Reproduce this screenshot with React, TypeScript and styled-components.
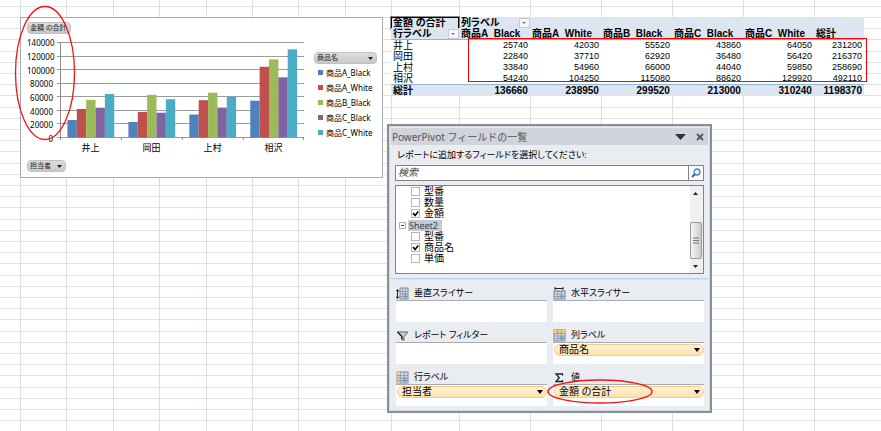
import React from "react";
import styled, { createGlobalStyle } from "styled-components";

const latin = `"Noto Sans", "Noto Sans CJK JP", sans-serif`;
const gothic = `"Liberation Sans", "Noto Sans CJK JP", sans-serif`;

const Global = createGlobalStyle`
  * { box-sizing: border-box; }
  body { margin: 0; background: #fff; font-family: ${gothic}; font-feature-settings: "palt"; color: #000; }
  button, input { font: inherit; font-feature-settings: inherit; color: inherit; margin: 0; padding: 0; }
`;

/* ---------- worksheet ---------- */

const Sheet = styled.main`
  position: relative;
  min-height: 100vh;
  overflow: hidden;
  display: flex;
  align-items: flex-start;
  gap: 4px;
  padding: 17px 17px 17px 20px;
`;

const GridLayer = styled.div`
  position: absolute;
  inset: 0;
`;

const Rules = styled.div`
  position: absolute;
  inset: 0;
`;

const RowRule = styled.div<{ $h: number }>`
  height: ${(p) => p.$h}px;
  border-bottom: 1px solid #e0e2e2;
`;

const ColumnRules = styled(Rules)`
  display: grid;
  grid-template-columns: 21px repeat(8, 1fr) 68px repeat(5, 71px) 50px 16px;
`;

const ColumnRule = styled.div`
  border-right: 1px solid #dbdede;
  &:last-child { border-right: 0; }
`;

const rowHeights = Array.from({ length: 120 }, (_, i) => (i === 0 ? 7 : i % 5 === 4 ? 12 : 11));

/* ---------- chart ---------- */

const ChartFrame = styled.section`
  position: relative;
  flex: 1 1 0;
  min-width: 300px;
  background: #fff;
  border: 1px solid #a9abac;
  padding: 4px 5px 5px 6px;
  display: flex;
  flex-direction: column;
  align-items: stretch;
  font-family: ${latin};
  font-size: 8px;
  line-height: 12px;
`;

const FieldButton = styled.button<{ $wide?: boolean }>`
  display: flex;
  align-items: center;
  justify-content: space-between;
  gap: 6px;
  align-self: ${(p) => (p.$wide ? "stretch" : "flex-start")};
  height: 12px;
  padding: 0 3px 0 2px;
  border: 1px solid #bfc1c3;
  border-radius: 4px;
  background: linear-gradient(#dcdddf, #c6c8ca);
  font-size: 7px;
  line-height: 10px;
  color: #222;
  white-space: nowrap;
`;

const ChartBody = styled.div`
  display: flex;
  height: 126px;
`;

const Axis = styled.div`
  width: 26px;
  padding-top: 3px;
  display: flex;
  flex-direction: column;
  text-align: right;
`;

const AxisLabel = styled.span`
  flex: 0 0 auto;
  height: 12px;
  margin-bottom: 2px;
  &:nth-child(3n) { margin-bottom: 1px; }
`;

const PlotColumn = styled.div`
  flex: 1;
  padding-top: 8px;
  padding-left: 4px;
`;

const Plot = styled.svg`
  display: block;
  width: 100%;
  height: 99px;
`;

const Categories = styled.div`
  display: grid;
  grid-template-columns: repeat(4, 1fr);
  padding-left: 3px;
  margin-top: 1px;
  text-align: center;
  font-size: 9px;
`;

const Legend = styled.div`
  width: 63px;
  margin: 18px 0 0 10px;
  display: flex;
  flex-direction: column;
  gap: 2px;
`;

const LegendItem = styled.div`
  display: flex;
  align-items: center;
  gap: 3px;
  padding-left: 4px;
  height: 13px;
  white-space: nowrap;
  font-feature-settings: normal;
`;

const Swatch = styled.i<{ $c: string }>`
  width: 5px;
  height: 5px;
  background: ${(p) => p.$c};
`;

const Series = [
  { name: "商品A_Black", color: "#4f81bd", values: [25740, 22840, 33840, 54240] },
  { name: "商品A_White", color: "#c0504d", values: [42030, 37710, 54960, 104250] },
  { name: "商品B_Black", color: "#9bbb59", values: [55520, 62920, 66000, 115080] },
  { name: "商品C_Black", color: "#8064a2", values: [43860, 36480, 44040, 88620] },
  { name: "商品C_White", color: "#4bacc6", values: [64050, 56420, 59850, 129920] },
];
const people = ["井上", "岡田", "上村", "相沢"];
const ticks = [140000, 120000, 100000, 80000, 60000, 40000, 20000, 0];

const Arrow = ({ w = 5, h = 3, up = false, color = "#222" }: { w?: number; h?: number; up?: boolean; color?: string }) => (
  <svg width={w} height={h} viewBox="0 0 10 6" preserveAspectRatio="none" aria-hidden="true">
    <path d={up ? "M0 6h10L5 0z" : "M0 0h10L5 6z"} fill={color} />
  </svg>
);

function Chart() {
  return (
    <ChartFrame aria-label="金額の合計">
      <FieldButton>金額 の合計</FieldButton>
      <ChartBody>
        <Axis>
          {ticks.map((t) => (
            <AxisLabel key={t}>{t}</AxisLabel>
          ))}
        </Axis>
        <PlotColumn>
          <Plot viewBox="0 0 248 99" preserveAspectRatio="none" aria-hidden="true">
            {ticks.map((t, i) => (
              <rect key={t} x="0" y={Math.round(i * 13.57)} width="248" height="1" fill="#9b9b9b" />
            ))}
            <rect x="3" y="0" width="1" height="98" fill="#8a8a8a" />
            {[0, 1, 2, 3, 4].map((i) => (
              <rect key={i} x={Math.min(3 + i * 61.2, 247)} y="95" width="1" height="3" fill="#8a8a8a" />
            ))}
            {people.map((_, g) =>
              Series.map((s, i) => {
                const h = (s.values[g] / 140000) * 95;
                return <rect key={s.name + g} x={3.5 + g * 61.2 + 7 + i * 9.4} y={95.5 - h} width="9.4" height={h} fill={s.color} />;
              })
            )}
          </Plot>
          <Categories>
            {people.map((p) => (
              <span key={p}>{p}</span>
            ))}
          </Categories>
        </PlotColumn>
        <Legend>
          <FieldButton $wide>
            商品名 <Arrow />
          </FieldButton>
          {Series.map((s) => (
            <LegendItem key={s.name}>
              <Swatch $c={s.color} />
              {s.name}
            </LegendItem>
          ))}
        </Legend>
      </ChartBody>
      <FieldButton>
        担当者 <Arrow />
      </FieldButton>
    </ChartFrame>
  );
}

/* ---------- pivot table ---------- */

const RightSide = styled.div`
  position: relative;
  flex: 0 0 auto;
`;

const TableWrap = styled.div`
  position: relative;
  margin-left: 4px;
`;

const Table = styled.table`
  border-collapse: collapse;
  table-layout: fixed;
  width: 473px;
  background: #fff;
  font-size: 10px;
  line-height: 11px;
`;

const Cell = styled.td<{ $bold?: boolean }>`
  height: 11px;
  padding: 0 2px;
  text-align: right;
  white-space: nowrap;
  font-size: ${(p) => (p.$bold ? 10 : 9)}px;
  font-weight: ${(p) => (p.$bold ? 700 : 400)};
`;

const Head = styled.th<{ $bold?: boolean }>`
  height: 11px;
  padding: 0 0 0 2px;
  text-align: left;
  white-space: nowrap;
  font-weight: ${(p) => (p.$bold ? 700 : 400)};
`;

const BlueRow = styled.tr`
  background: #dce6f1;
`;

const HeadRow = styled(BlueRow)`
  border-bottom: 1px solid #95b3d7;
`;

const TotalRow = styled(BlueRow)`
  border-top: 1px solid #95b3d7;
`;

const HeadContent = styled.span<{ $spread?: boolean }>`
  display: flex;
  justify-content: ${(p) => (p.$spread ? "space-between" : "flex-start")};
  align-items: center;
  height: 11px;
  overflow: hidden;
`;

const ActiveCell = styled.span`
  display: block;
  height: 12px;
  margin: 0 0 -1px -2px;
  padding-left: 1px;
  line-height: 10px;
  border: 1px solid #000;
  box-shadow: 0 0 0 1px rgba(0, 0, 0, 0.45);
`;

const DropButton = styled.button`
  display: flex;
  align-items: center;
  justify-content: center;
  width: 11px;
  height: 10px;
  flex: none;
  border: 1px solid #c3c9cf;
  background: #f5f7f9;
`;

const LabelDrop = styled(HeadContent)`
  gap: 19px;
`;

const RedFrame = styled.div`
  position: absolute;
  left: 77px;
  right: -3px;
  top: 21px;
  height: 44px;
  border: 1px solid #f00;
  pointer-events: none;
`;

const totals = [136660, 238950, 299520, 213000, 310240, 1198370];
const rowTotals = [231200, 216370, 258690, 492110];

function Pivot() {
  return (
    <TableWrap>
      <Table>
        <colgroup>
          <col width="68" />
          {Series.map((s) => (
            <col key={s.name} width="71" />
          ))}
          <col width="50" />
        </colgroup>
        <thead>
          <BlueRow>
            <Head $bold>
              <ActiveCell>金額 の合計</ActiveCell>
            </Head>
            <Head $bold colSpan={6}>
              <LabelDrop>
                列ラベル
                <DropButton aria-label="列ラベル"><Arrow w={4} h={2} color="#777" /></DropButton>
              </LabelDrop>
            </Head>
          </BlueRow>
          <HeadRow>
            <Head $bold>
              <HeadContent $spread>
                行ラベル
                <DropButton aria-label="行ラベル"><Arrow w={4} h={2} color="#777" /></DropButton>
              </HeadContent>
            </Head>
            {Series.map((s) => (
              <Head $bold key={s.name}>
                <HeadContent>{s.name}</HeadContent>
              </Head>
            ))}
            <Head $bold>総計</Head>
          </HeadRow>
        </thead>
        <tbody>
          {people.map((p, r) => (
            <tr key={p}>
              <Head scope="row">{p}</Head>
              {Series.map((s) => (
                <Cell key={s.name}>{s.values[r]}</Cell>
              ))}
              <Cell>{rowTotals[r]}</Cell>
            </tr>
          ))}
          <TotalRow>
            <Head $bold scope="row">総計</Head>
            {totals.map((t) => (
              <Cell $bold key={t}>{t}</Cell>
            ))}
          </TotalRow>
        </tbody>
      </Table>
      <RedFrame />
    </TableWrap>
  );
}

/* ---------- field list panel ---------- */

const Panel = styled.section`
  position: relative;
  width: 325px;
  margin-top: 28px;
  border: 2px solid #888f96;
  background: #e9ecf1;
  padding: 2px;
  box-shadow: inset 0 0 0 1px #d3d9e0;
  font-size: 9px;
  line-height: 12px;
`;

const TitleBar = styled.header`
  display: flex;
  align-items: center;
  gap: 10px;
  height: 17px;
  padding: 0 4px 0 1px;
  background: #d0d4dc;
  color: #555;
  font-family: ${latin};
  font-size: 10px;
  line-height: 16px;
  font-feature-settings: normal;
`;

const Title = styled.h1`
  flex: 1;
  margin: 0;
  font-size: 10px;
  font-weight: 400;
`;

const PlainButton = styled.button`
  display: flex;
  border: 0;
  background: none;
`;

const Hint = styled.p`
  margin: 4px 6px;
`;

const SearchBox = styled.div`
  display: flex;
  height: 16px;
  margin: 0 4px 4px;
  border: 1px solid #7f8488;
  background: #fff;
`;

const SearchInput = styled.input`
  flex: 1;
  min-width: 0;
  padding: 0 2px;
  border: 0;
  background: none;
  font-size: 10px;
  outline: 0;
  &::placeholder { color: #444; font-style: italic; opacity: 1; }
`;

const SearchButton = styled(PlainButton)`
  width: 15px;
  align-items: center;
  justify-content: center;
  border-left: 1px solid #7f8488;
`;

const ListBox = styled.div`
  display: flex;
  height: 89px;
  margin: 0 4px;
  border: 1px solid #7f8488;
  background: #fff;
`;

const Tree = styled.div`
  flex: 1;
  overflow: hidden;
  padding-left: 3px;
  font-size: 10px;
  line-height: 11px;
`;

const TreeItem = styled.label`
  display: flex;
  align-items: center;
  gap: 4px;
  height: 11px;
  padding-left: 12px;
`;

const TreeGroup = styled.div`
  display: flex;
  align-items: center;
  gap: 2px;
  height: 12px;
  color: #444;
`;

const GroupName = styled.span`
  padding: 0 4px 0 1px;
  font: 9px/11px ${latin};
  background: #c0cbd6;
`;

const Check = styled.input`
  appearance: none;
  width: 9px;
  height: 9px;
  border: 1px solid #b4b8bb;
  background: #fff;
  &:checked {
    background: #fff url("data:image/svg+xml,%3Csvg xmlns='http://www.w3.org/2000/svg' viewBox='0 0 7 7'%3E%3Cpath d='M1 3l2 2.4L6.3 1.4' fill='none' stroke='%23000' stroke-width='1.6'/%3E%3C/svg%3E");
  }
`;

const ScrollTrack = styled.div`
  width: 13px;
  display: flex;
  flex-direction: column;
  align-items: center;
  justify-content: space-between;
  padding: 6px 1px 5px 0;
  background: #f0f0f0;
`;

const Thumb = styled.div`
  width: 12px;
  height: 37px;
  margin-top: 20px;
  border: 1px solid #989ca0;
  border-radius: 2px;
  background: linear-gradient(90deg, #f5f5f5, #c9cccf);
  display: flex;
  align-items: center;
  justify-content: center;
`;

const Divider = styled.hr`
  height: 2px;
  margin: 4px 0 6px;
  border: 0;
  background: linear-gradient(#b0d2f5 50%, #d4e4f4 50%);
`;

const Areas = styled.div`
  display: grid;
  grid-template-columns: 1fr 1fr;
  column-gap: 6px;
  row-gap: 6px;
  padding: 0 4px 3px 5px;
`;

const AreaHead = styled.h2`
  display: flex;
  align-items: center;
  gap: 5px;
  height: 14px;
  margin: 0;
  font-size: 9px;
  font-weight: 400;
  line-height: 12px;
`;

const DropArea = styled.div`
  height: 22px;
  border-top: 1px solid #a9adb2;
  background: #fff;
  padding: 1px 0 0 1px;
`;

const Pill = styled.button`
  display: flex;
  align-items: center;
  justify-content: space-between;
  width: 100%;
  height: 12px;
  padding: 0 3px 0 4px;
  border: 1px solid #fbc98a;
  border-radius: 6px;
  background: linear-gradient(#fff3dc, #fde0a8);
  font-size: 10px;
  line-height: 10px;
`;

const AreaBox = styled.div`
  position: relative;
`;

const Ring = styled.svg<{ $x: number; $y: number }>`
  position: absolute;
  left: ${(p) => p.$x}px;
  top: ${(p) => p.$y}px;
  pointer-events: none;
`;

const TableIcon = ({ kind }: { kind: "v" | "h" | "col" | "row" }) => {
  const x = kind === "v" ? 4 : 1;
  const y = kind === "h" ? 4 : 1;
  const w = 12 - x;
  const h = 12 - y;
  return (
    <svg width="13" height="13" viewBox="0 0 13 13" aria-hidden="true">
      <rect x={x} y={y} width={w} height={h} fill="#d5e0ee" stroke="#7d8995" strokeWidth="1" />
      <rect x={x + w / 2} y={y + h / 2} width={w / 2} height={h / 2} fill="#9db8dc" />
      {kind === "col" && <rect x="1" y="1" width="11" height="3" fill="#f6cf7d" />}
      {kind === "row" && <rect x="1" y="1" width="3" height="11" fill="#f6cf7d" />}
      <path d={`M${x} 7h${w}M${x} 9.5h${w}M${x} 4.5h${w}M${x + w / 3} ${y}v${h}M${x + (2 * w) / 3} ${y}v${h}`} stroke="#7d8995" strokeWidth="0.7" />
      {kind === "v" && <path d="M1.5 3v8M0 4.5L1.5 2.5 3 4.5M0 9.5L1.5 11.5 3 9.5" stroke="#222" fill="none" />}
      {kind === "h" && <path d="M2 0v3M10 0v3M2 1.5h8" stroke="#222" fill="none" />}
    </svg>
  );
};

const Funnel = () => (
  <svg width="13" height="13" viewBox="0 0 13 13" aria-hidden="true">
    <path d="M1 3h11L8 7.5v4L5.5 10V7.5z" fill="#c9ccd0" stroke="#666" />
    <path d="M1.5 3l4.4 4.6v2.8" stroke="#222" strokeWidth="1.3" fill="none" />
  </svg>
);

const Sigma = () => (
  <svg width="13" height="13" viewBox="0 0 13 13" aria-hidden="true">
    <path d="M9.5 4.5V3H3l3.2 3.7L3 10.5h6.5V9" stroke="#222" strokeWidth="1.3" fill="none" />
  </svg>
);

const areas = [
  { title: "垂直スライサー", icon: <TableIcon kind="v" /> },
  { title: "水平スライサー", icon: <TableIcon kind="h" /> },
  { title: "レポート フィルター", icon: <Funnel /> },
  { title: "列ラベル", icon: <TableIcon kind="col" />, field: "商品名" },
  { title: "行ラベル", icon: <TableIcon kind="row" />, field: "担当者" },
  { title: "値", icon: <Sigma />, field: "金額 の合計", ring: true },
];

const Field = ({ name, checked = false }: { name: string; checked?: boolean }) => (
  <TreeItem>
    <Check type="checkbox" defaultChecked={checked} />
    {name}
  </TreeItem>
);

function FieldList() {
  return (
    <Panel>
      <TitleBar>
        <Title>PowerPivot フィールドの一覧</Title>
        <PlainButton aria-label="メニュー"><Arrow w={11} h={6} color="#333" /></PlainButton>
        <PlainButton aria-label="閉じる">
          <svg width="8" height="8" viewBox="0 0 8 8"><path d="M1 1l6 6M7 1L1 7" stroke="#555" strokeWidth="1.8" /></svg>
        </PlainButton>
      </TitleBar>
      <Hint>レポートに追加するフィールドを選択してください:</Hint>
      <SearchBox>
        <SearchInput placeholder="検索" aria-label="検索" />
        <SearchButton aria-label="検索">
          <svg width="10" height="10" viewBox="0 0 10 10">
            <circle cx="6" cy="4" r="3" fill="#e3f1fc" stroke="#3c7fc4" strokeWidth="1.3" />
            <path d="M4 6L1 9" stroke="#2a62ad" strokeWidth="1.8" />
          </svg>
        </SearchButton>
      </SearchBox>
      <ListBox>
        <Tree>
          <Field name="型番" />
          <Field name="数量" />
          <Field name="金額" checked />
          <TreeGroup>
            <svg width="7" height="7" viewBox="0 0 7 7" aria-hidden="true">
              <path d="M.5 .5h6v6h-6z" fill="#fff" stroke="#aaa" />
              <path d="M2 3.5h3" stroke="#444" />
            </svg>
            <GroupName>Sheet2</GroupName>
          </TreeGroup>
          <Field name="型番" />
          <Field name="商品名" checked />
          <Field name="単価" />
        </Tree>
        <ScrollTrack>
          <Arrow up w={5} h={3} />
          <Thumb>
            <svg width="6" height="7" viewBox="0 0 6 7"><path d="M0 1h6M0 3.5h6M0 6h6" stroke="#777" /></svg>
          </Thumb>
          <Arrow w={5} h={3} />
        </ScrollTrack>
      </ListBox>
      <Divider />
      <Areas>
        {areas.map((a) => (
          <AreaBox key={a.title}>
            <AreaHead>
              {a.icon}
              {a.title}
            </AreaHead>
            <DropArea>
              {a.field && (
                <Pill>
                  {a.field} <Arrow w={6} h={4} color="#000" />
                </Pill>
              )}
            </DropArea>
            {a.ring && (
              <Ring $x={-6} $y={9} width="106" height="25" viewBox="0 0 106 25" aria-hidden="true">
                <ellipse cx="53" cy="12.5" rx="52" ry="11.5" fill="none" stroke="#f01414" strokeWidth="1.3" />
              </Ring>
            )}
          </AreaBox>
        ))}
      </Areas>
    </Panel>
  );
}

export default function App() {
  return (
    <>
      <Global />
      <Sheet>
        <GridLayer aria-hidden="true">
          <Rules>
            {rowHeights.map((h, i) => (
              <RowRule key={i} $h={h} />
            ))}
          </Rules>
          <ColumnRules>
            {Array.from({ length: 16 }, (_, i) => (
              <ColumnRule key={i} />
            ))}
          </ColumnRules>
        </GridLayer>
        <Chart />
        <RightSide>
          <Pivot />
          <FieldList />
        </RightSide>
        <Ring $x={14} $y={5} width="62" height="136" viewBox="0 0 62 136" aria-hidden="true">
          <ellipse cx="31" cy="68" rx="29.5" ry="66.5" fill="none" stroke="#f01414" strokeWidth="1.3" />
        </Ring>
      </Sheet>
    </>
  );
}
